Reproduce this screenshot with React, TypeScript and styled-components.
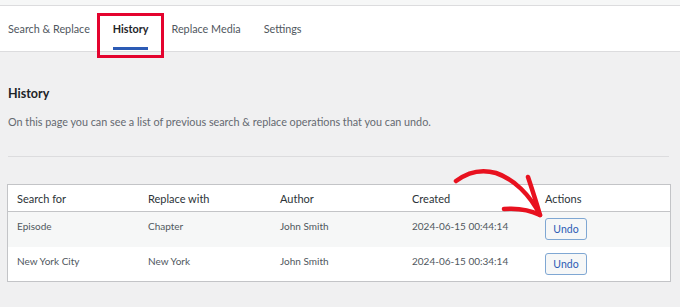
import React from 'react';
import styled, { createGlobalStyle } from 'styled-components';

const GlobalStyle = createGlobalStyle`
  html, body {
    margin: 0;
    padding: 0;
    background: #f0f0f1;
    font-family: Lato, "Open Sans", sans-serif;
  }
`;

const Page = styled.div`
  position: relative;
  width: 680px;
  height: 307px;
  overflow: hidden;
  background: #f0f0f1;
`;

const TopStrip = styled.div`
  height: 5px;
  background: #f6f7f7;
  border-bottom: 1px solid #dcdcde;
`;

const Nav = styled.nav`
  position: relative;
  display: flex;
  align-items: stretch;
  gap: 23px;
  height: 45px;
  padding-left: 8px;
  background: #fff;
  border-bottom: 1px solid #dcdcde;
`;

const Tab = styled.div<{ $active?: boolean }>`
  position: relative;
  display: flex;
  align-items: center;
  font-size: 10.8px;
  color: ${(p) => (p.$active ? '#1d2327' : '#50575e')};
  font-weight: ${(p) => (p.$active ? 700 : 400)};
  padding-bottom: 1px;

  &::after {
    content: '';
    display: ${(p) => (p.$active ? 'block' : 'none')};
    position: absolute;
    left: 0;
    right: 0;
    bottom: 1px;
    height: 3px;
    background: #2c5bb5;
  }
`;

const Highlight = styled.div`
  position: absolute;
  left: 97px;
  top: 7px;
  width: 61px;
  height: 39px;
  border: 3px solid #e4032e;
  pointer-events: none;
`;

const Content = styled.main`
  padding: 0 8px;
`;

const Title = styled.h2`
  margin: 33px 0 0;
  font-size: 12.5px;
  line-height: 18px;
  font-weight: 700;
  color: #1d2327;
`;

const Description = styled.p`
  margin: 11px 0 0;
  font-size: 10.8px;
  line-height: 16px;
  color: #646970;
`;

const Divider = styled.hr`
  margin: 26px 3px 0 0;
  border: 0;
  border-top: 1px solid #dcdcde;
`;

const Table = styled.table`
  margin: 27px 0 0 -1px;
  width: 664px;
  border-collapse: collapse;
  background: #fff;
  border: 1px solid #c3c4c7;
  table-layout: fixed;
`;

const HeadCell = styled.th<{ $w: number }>`
  width: ${(p) => p.$w - 9}px;
  height: 26px;
  padding: 0 0 0 9px;
  text-align: left;
  font-size: 11px;
  font-weight: 400;
  color: #2c3338;
  border-bottom: 1px solid #c3c4c7;
`;

const Row = styled.tr<{ $alt?: boolean }>`
  background: ${(p) => (p.$alt ? '#f6f7f7' : '#fff')};
`;

const Cell = styled.td`
  height: 35px;
  padding: 7px 0 0 9px;
  box-sizing: border-box;
  vertical-align: top;
  font-size: 10px;
  line-height: 14px;
  color: #50575e;
`;

const UndoButton = styled.button`
  margin-top: -1px;
  width: 42px;
  height: 22px;
  padding: 0;
  font-family: inherit;
  font-size: 10.5px;
  color: #2c5bb5;
  background: #f6f7f7;
  border: 1px solid #7fa7d3;
  border-radius: 3px;
`;

const Arrow = styled.svg`
  position: absolute;
  left: 450px;
  top: 165px;
  pointer-events: none;
`;

const columns = [
  { label: 'Search for', w: 131 },
  { label: 'Replace with', w: 132 },
  { label: 'Author', w: 132 },
  { label: 'Created', w: 133 },
  { label: 'Actions', w: 134 },
];

const rows = [
  { search: 'Episode', replace: 'Chapter', author: 'John Smith', created: '2024-06-15 00:44:14' },
  { search: 'New York City', replace: 'New York', author: 'John Smith', created: '2024-06-15 00:34:14' },
];

export default function App() {
  return (
    <>
      <GlobalStyle />
      <Page>
        <TopStrip />
        <Nav>
          <Tab>Search &amp; Replace</Tab>
          <Tab $active>History</Tab>
          <Tab>Replace Media</Tab>
          <Tab>Settings</Tab>
          <Highlight />
        </Nav>
        <Content>
          <Title>History</Title>
          <Description>
            On this page you can see a list of previous search &amp; replace operations that you can undo.
          </Description>
          <Divider />
          <Table>
            <thead>
              <tr>
                {columns.map((c) => (
                  <HeadCell key={c.label} $w={c.w}>
                    {c.label}
                  </HeadCell>
                ))}
              </tr>
            </thead>
            <tbody>
              {rows.map((r, i) => (
                <Row key={r.search} $alt={i === 0}>
                  <Cell>{r.search}</Cell>
                  <Cell>{r.replace}</Cell>
                  <Cell>{r.author}</Cell>
                  <Cell>{r.created}</Cell>
                  <Cell>
                    <UndoButton>Undo</UndoButton>
                  </Cell>
                </Row>
              ))}
            </tbody>
          </Table>
        </Content>
        <Arrow width="100" height="60" viewBox="0 0 100 60">
          <path
            d="M6 16 C 18 7, 32 4, 46 8 C 64 14, 80 30, 90 50"
            fill="none"
            stroke="#e8111f"
            strokeWidth="4.5"
            strokeLinecap="round"
          />
          <path
            d="M78 12 C 82 24, 86 36, 90 50 C 78 44, 66 43, 54 44"
            fill="none"
            stroke="#e8111f"
            strokeWidth="4.5"
            strokeLinecap="round"
            strokeLinejoin="round"
          />
        </Arrow>
      </Page>
    </>
  );
}
